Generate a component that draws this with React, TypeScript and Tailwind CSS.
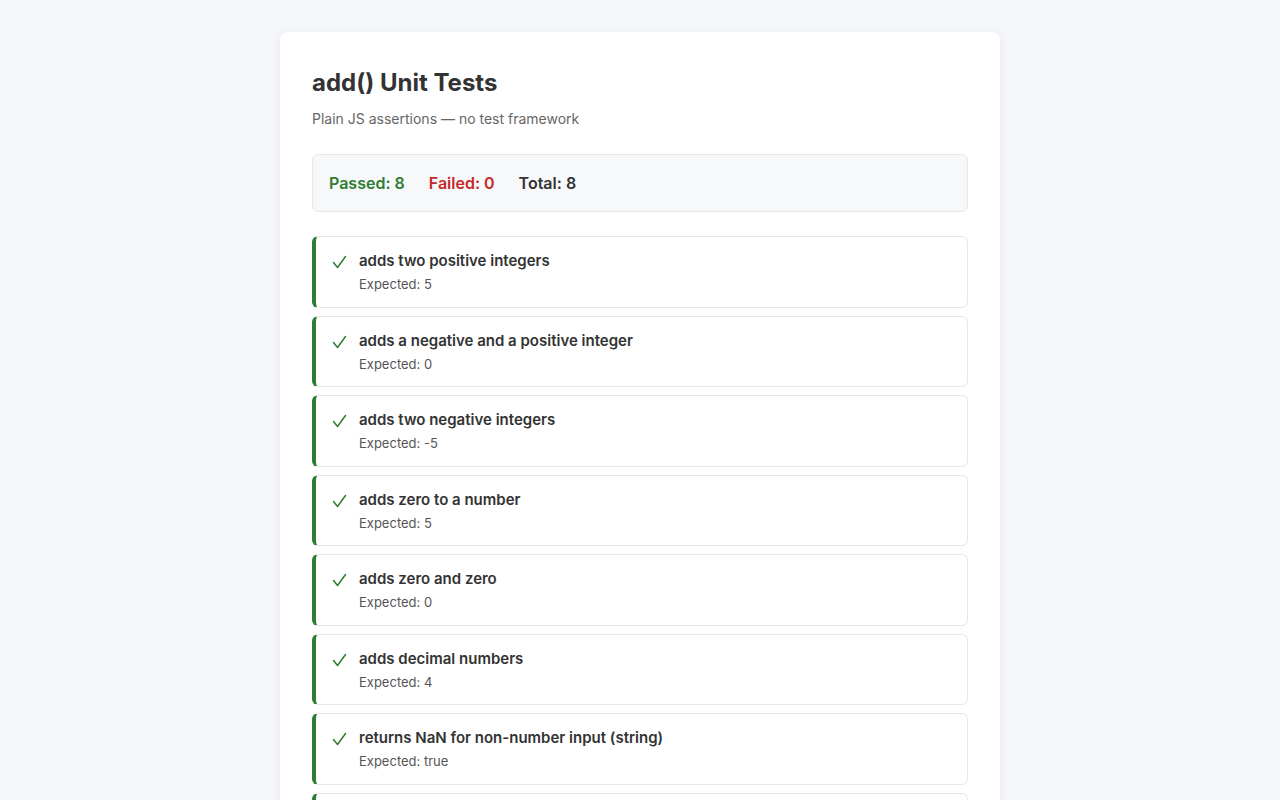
const tests = [
  { name: 'adds two positive integers', expected: '5' },
  { name: 'adds a negative and a positive integer', expected: '0' },
  { name: 'adds two negative integers', expected: '-5' },
  { name: 'adds zero to a number', expected: '5' },
  { name: 'adds zero and zero', expected: '0' },
  { name: 'adds decimal numbers', expected: '4' },
  { name: 'returns NaN for non-number input (string)', expected: 'true' },
  { name: 'returns NaN for non-number input (undefined)', expected: 'true' },
];

function Check() {
  return (
    <svg width="15" height="15" viewBox="0 0 15 15" className="mt-[5px] shrink-0" fill="none">
      <polyline points="1.5,7.5 5.5,12.5 13.5,1.5" stroke="#2e7d32" strokeWidth="1.5" strokeLinecap="round" strokeLinejoin="round" />
    </svg>
  );
}

function TestRow({ name, expected }: { name: string; expected: string }) {
  return (
    <div className="flex items-start gap-3 rounded-md border border-[#e5e7eb] border-l-4 border-l-[#2e7d32] bg-white pt-[13px] pb-3 pl-4 pr-4">
      <Check />
      <div>
        <div className="text-[15px] font-semibold leading-[22px] text-[#333]">{name}</div>
        <div className="mt-[3px] text-[13px] leading-[19.5px] text-[#555]">Expected: {expected}</div>
      </div>
    </div>
  );
}

export default function App() {
  const passed = tests.length;
  return (
    <div className="min-h-screen bg-[#f5f6fa] pt-8 pb-8 font-['Inter',sans-serif]">
      <div className="mx-auto w-[720px] rounded-lg bg-white p-8 shadow-[0_2px_8px_rgba(0,0,0,0.06)]">
        <h1 className="text-2xl font-bold leading-[38px] text-[#333]">add() Unit Tests</h1>
        <p className="mt-[7px] text-sm leading-5 text-[#666]">Plain JS assertions — no test framework</p>

        <div className="mt-[25px] flex gap-6 rounded-md border border-[#e5e7eb] bg-[#f7f8fa] px-4 py-4 text-base font-semibold leading-6">
          <span className="text-[#2e7d32]">Passed: {passed}</span>
          <span className="text-[#c62828]">Failed: 0</span>
          <span className="text-[#333]">Total: {tests.length}</span>
        </div>

        <div className="mt-6 flex flex-col gap-2">
          {tests.map((t) => (
            <TestRow key={t.name} name={t.name} expected={t.expected} />
          ))}
        </div>
      </div>
    </div>
  );
}
